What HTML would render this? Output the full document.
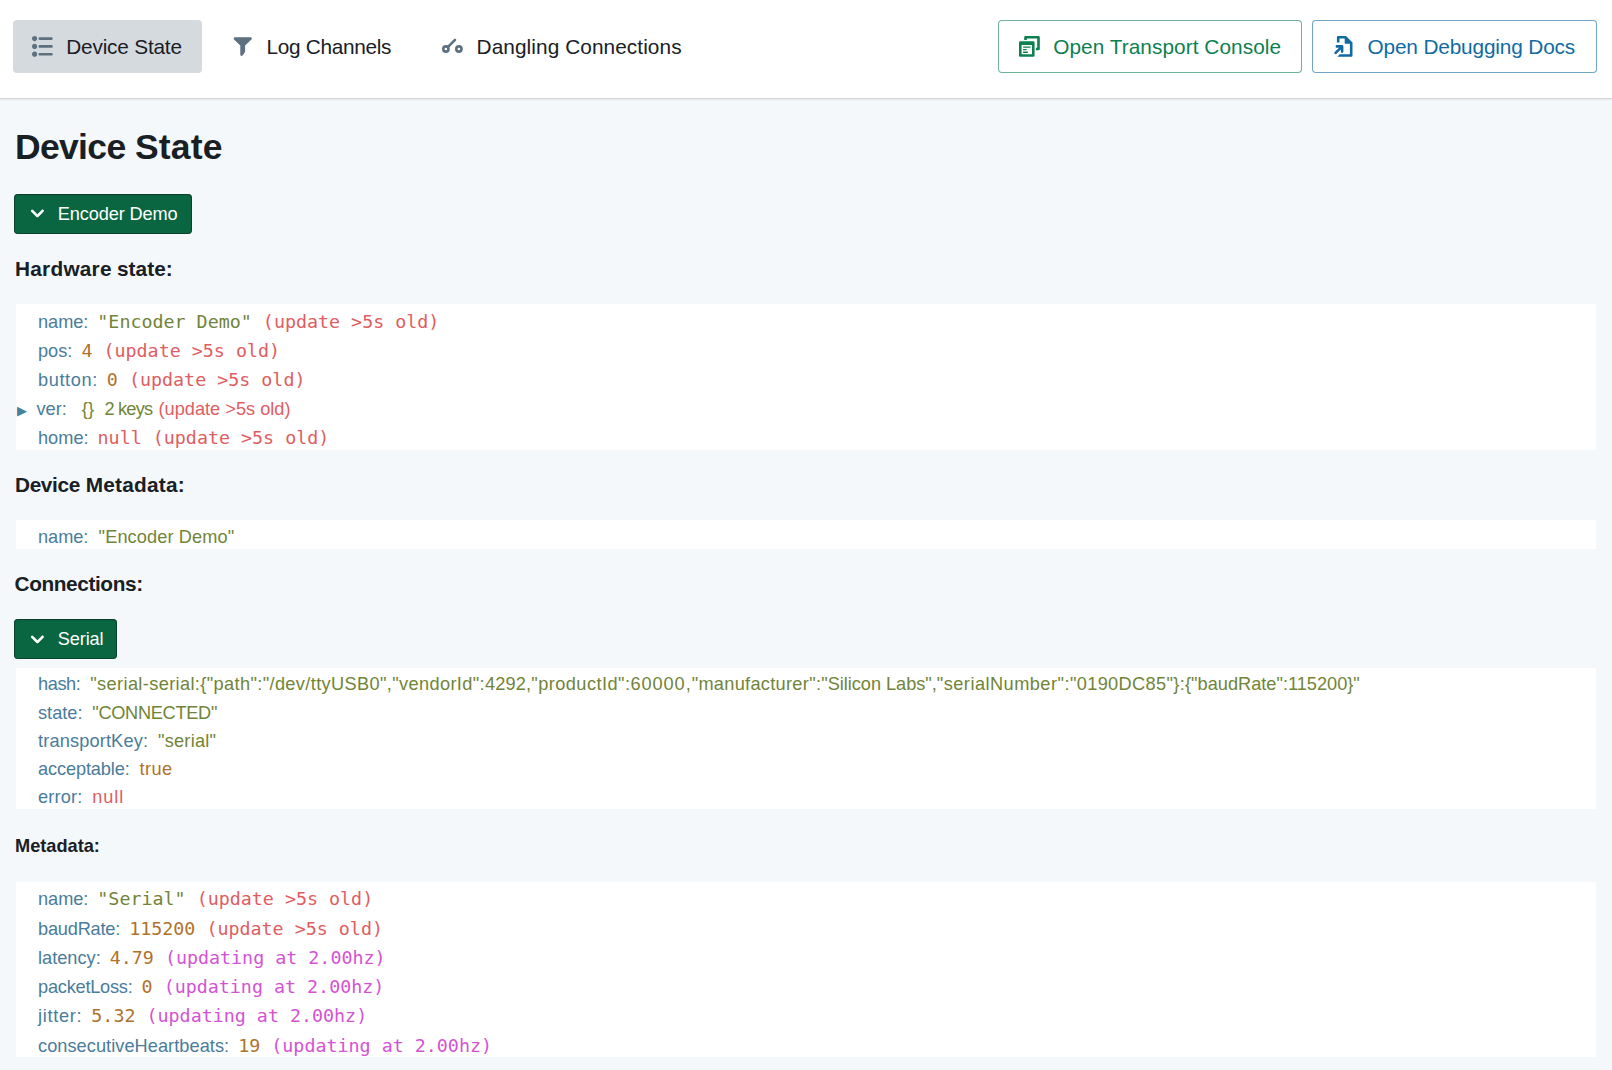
<!DOCTYPE html>
<html lang="en">
<head>
<meta charset="utf-8">
<title>Device State</title>
<style>
html,body{margin:0;padding:0;}
body{width:1612px;height:1070px;overflow:hidden;background:#f5f8fa;color:#182026;
  font-family:"Liberation Sans",sans-serif;font-size:18.2px;position:relative;
  }
*{box-sizing:border-box;}
.nav{position:absolute;left:0;top:0;width:1612px;height:98px;background:#fff;}
.nav:after{content:"";position:absolute;left:0;top:98px;width:1612px;height:3px;
  background:linear-gradient(#d3d7db 0,#d3d7db 1px,#e9ecef 1px,#e9ecef 2px,#f2f5f7 2px,#f2f5f7 3px);}
.nbtn{position:absolute;top:20px;height:52.5px;border-radius:4px;font-size:20.8px;
  line-height:52.5px;white-space:nowrap;color:#182026;}
.nbtn svg{position:absolute;top:15.85px;width:20.8px;height:20.8px;fill:#5c7080;overflow:visible;}
.nbtn .t{position:absolute;top:0.7px;}
.nbtn.active{background:rgba(115,134,148,.3);}
.nbtn.out{border:1px solid;background:#fff;}
.nbtn.green{color:#0d8050;border-color:rgba(13,128,80,.6);}
.nbtn.green svg{fill:#0d8050;}
.nbtn.blue{color:#106ba3;border-color:rgba(16,107,163,.6);}
.nbtn.blue svg{fill:#106ba3;}
h2,h5,h6{margin:0;position:absolute;left:15px;font-weight:bold;white-space:nowrap;color:#182026;}
h2{font-size:35.5px;line-height:42px;letter-spacing:-0.3px;}
h5{font-size:20.8px;line-height:24px;}
h6{font-size:18.2px;line-height:22px;}
.gbtn{position:absolute;left:14.2px;height:39.75px;border-radius:4px;background:#0a6640;color:#fff;
  box-shadow:inset 0 0 0 1px rgba(16,22,26,.4),inset 0 1px 2px rgba(16,22,26,.2);
  font-size:18.2px;line-height:41.5px;white-space:nowrap;}
.gbtn svg{position:absolute;left:12.7px;top:9.45px;width:20.8px;height:20.8px;fill:#fff;}
.gbtn .t{position:absolute;left:43.6px;top:0;letter-spacing:-0.13px;}
.box{position:absolute;left:15.75px;width:1580.5px;background:#fff;}
.row{position:relative;height:28.2px;line-height:28.2px;white-space:nowrap;padding-left:22.25px;}
.k{color:#4a7c9b;}
.v{margin-left:9.8px;}
.v.mono{margin-left:9px;}
.mono{font-family:"DejaVu Sans Mono","Liberation Mono",monospace;font-size:18.33px;}
.s{color:#718438;}
.n{color:#b0722a;}
.nul{color:#e05d62;}
.old{color:#e05d62;}
.upd{color:#d453d4;}
.arrow{position:absolute;left:1.1px;top:0.9px;color:#4a7f99;font-size:13.4px;}
</style>
</head>
<body>

<div class="nav">
  <div class="nbtn active" style="left:13px;width:188.5px">
    <svg viewBox="0 0 16 16" style="left:19px"><path d="M2 6C.9 6 0 6.9 0 8s.9 2 2 2 2-.9 2-2-.9-2-2-2zm4-3h9c.55 0 1-.45 1-1s-.45-1-1-1H6c-.55 0-1 .45-1 1s.45 1 1 1zM2 12c-1.1 0-2 .9-2 2s.9 2 2 2 2-.9 2-2-.9-2-2-2zm13-5H6c-.55 0-1 .45-1 1s.45 1 1 1h9c.55 0 1-.45 1-1s-.45-1-1-1zm0 6H6c-.55 0-1 .45-1 1s.45 1 1 1h9c.55 0 1-.45 1-1s-.45-1-1-1zM2 0C.9 0 0 .9 0 2s.9 2 2 2 2-.9 2-2-.9-2-2-2z"/></svg>
    <span class="t" style="left:53.3px;letter-spacing:-0.2px">Device State</span>
  </div>
  <div class="nbtn" style="left:213.25px;width:197px">
    <svg viewBox="0 0 16 16" style="left:19.5px"><path d="M14.5 1.9c0-.55-.45-1-1-1h-12a1 1 0 00-.71 1.71L5.6 7.3v7c0 .55.45 1 1 1 .28 0 .53-.11.71-.29l1.7-2.300c.18-.18.29-.43.29-.71V7.3l4.9-4.69c.18-.18.3-.43.3-.71z"/></svg>
    <span class="t" style="left:53.2px;letter-spacing:-0.3px">Log Channels</span>
  </div>
  <div class="nbtn" style="left:422.25px;width:278px">
    <svg viewBox="0 0 16 16" style="left:19.5px"><g fill="none" stroke="#5c7080" stroke-width="2"><circle cx="3" cy="10" r="2"/><circle cx="13" cy="10" r="2"/><path d="M4.6 8.4L10 3" stroke-linecap="round"/></g></svg>
    <span class="t" style="left:54.3px;letter-spacing:0.08px">Dangling Connections</span>
  </div>
  <div class="nbtn out green" style="left:998px;width:303.5px">
    <svg viewBox="0 0 16 16" style="left:20px;top:14.85px"><path d="M3.5 9h5c.28 0 .5-.22.5-.5S8.780 8 8.500 8h-5c-.28 0-.5.22-.5.5s.22.5.5.5zm0 2h2c.28 0 .5-.22.5-.5s-.22-.5-.5-.5h-2c-.28 0-.5.22-.5.5s.22.5.5.5zm0 2h3c.28 0 .5-.22.5-.5s-.22-.5-.5-.5h-3c-.28 0-.5.22-.5.5s.22.5.5.5zM11 4H1c-.55 0-1 .45-1 1v10c0 .55.45 1 1 1h10c.55 0 1-.45 1-1V5c0-.55-.45-1-1-1zm-1 10H2V7h8v7zm5-14H5c-.55 0-1 .45-1 1v2h2V2h8v7h-1v2h2c.55 0 1-.45 1-1V1c0-.55-.45-1-1-1z"/></svg>
    <span class="t" style="left:54.2px;top:-0.3px;letter-spacing:0.06px">Open Transport Console</span>
  </div>
  <div class="nbtn out blue" style="left:1312px;width:285px">
    <svg viewBox="0 0 16 16" style="left:20px;top:14.85px"><path d="M6 12c0 .55.45 1 1 1s1-.45 1-1V8c0-.55-.45-1-1-1H3c-.55 0-1 .45-1 1s.45 1 1 1h1.590L1.300 12.290c-.19.18-.3.43-.3.71a1.003 1.003 0 001.710.71L6 10.410V12zM10 0H4c-.55 0-1 .45-1 1v4h2V2h4v4h4v8H5.240l-1.800 1.800c.16.12.35.2.56.2h10c.55 0 1-.45 1-1V5l-5-5z"/></svg>
    <span class="t" style="left:54.5px;top:-0.3px;letter-spacing:-0.15px">Open Debugging Docs</span>
  </div>
</div>

<h2 style="top:125.7px"><span style="letter-spacing:-0.67px">Device</span> <span style="letter-spacing:0.14px">State</span></h2>

<div class="gbtn" style="top:194px;width:177.5px">
  <svg viewBox="0 0 16 16"><path d="M12 5c-.28 0-.53.11-.71.29L8 8.590l-3.290-3.300a1.003 1.003 0 00-1.420 1.420l4 4c.18.18.43.29.71.29s.53-.11.71-.29l4-4A1.003 1.003 0 0012 5z"/></svg>
  <span class="t">Encoder Demo</span>
</div>

<h5 style="top:257px"><span style="letter-spacing:0.25px">Hardware</span> <span style="letter-spacing:0.05px;margin-left:-0.6px">state:</span></h5>

<div class="box" style="top:303.9px;height:146.1px;padding-top:3.45px">
  <div class="row" style="height:29px;line-height:29px"><span class="k" style="letter-spacing:-0.05px">name:</span><span class="v mono"><span class="s">"Encoder Demo"</span> <span class="old">(update &gt;5s old)</span></span></div>
  <div class="row" style="height:29px;line-height:29px"><span class="k">pos:</span><span class="v mono"><span class="n">4</span> <span class="old">(update &gt;5s old)</span></span></div>
  <div class="row" style="height:29px;line-height:29px"><span class="k" style="letter-spacing:0.6px">button:</span><span class="v mono"><span class="n">0</span> <span class="old">(update &gt;5s old)</span></span></div>
  <div class="row" style="height:29px;line-height:29px;top:0.6px"><span class="arrow">&#9654;</span><span class="k" style="margin-left:-1.5px">ver:</span><span class="v s" style="margin-left:15px">{}</span><span class="v s" style="margin-left:10.5px;letter-spacing:-0.8px">2 keys</span><span class="v old" style="margin-left:6.3px">(update &gt;5s old)</span></div>
  <div class="row" style="height:29px;line-height:29px"><span class="k">home:</span><span class="v mono"><span class="nul">null</span> <span class="old">(update &gt;5s old)</span></span></div>
</div>

<h5 style="top:472.6px"><span style="letter-spacing:-0.37px">Device</span> <span style="letter-spacing:0.25px">Metadata:</span></h5>

<div class="box" style="top:519.9px;height:29.1px;padding-top:2.9px">
  <div class="row"><span class="k" style="letter-spacing:-0.05px">name:</span><span class="v s" style="letter-spacing:0.1px;margin-left:10.3px">"Encoder Demo"</span></div>
</div>

<h5 style="top:571.6px;left:14.6px;letter-spacing:-0.4px">Connections:</h5>

<div class="gbtn" style="top:619.2px;width:102.5px">
  <svg viewBox="0 0 16 16"><path d="M12 5c-.28 0-.53.11-.71.29L8 8.590l-3.290-3.300a1.003 1.003 0 00-1.420 1.420l4 4c.18.18.43.29.71.29s.53-.11.71-.29l4-4A1.003 1.003 0 0012 5z"/></svg>
  <span class="t">Serial</span>
</div>

<div class="box" style="top:667.9px;height:141.2px;padding-top:2.6px">
  <div class="row"><span class="k" style="letter-spacing:-0.4px">hash:</span><span class="v s"><span style="letter-spacing:0.366px">"serial-serial:{"path":"/dev/ttyUSB0","vendorId":</span><span style="letter-spacing:0.150px">4292,</span><span style="letter-spacing:0.446px">"productId":</span><span style="letter-spacing:0.925px">60000,</span><span style="letter-spacing:0.300px">"manufacturer":</span><span style="letter-spacing:-0.033px">"Silicon Labs",</span><span style="letter-spacing:0.467px">"serialNumber":</span><span style="letter-spacing:0.342px">"0190DC85"}:</span><span style="letter-spacing:0.000px">{"baudRate":115200}"</span></span></div>
  <div class="row"><span class="k">state:</span><span class="v s" style="letter-spacing:-0.3px">"CONNECTED"</span></div>
  <div class="row"><span class="k" style="letter-spacing:0.15px">transportKey:</span><span class="v s" style="letter-spacing:0.25px">"serial"</span></div>
  <div class="row"><span class="k" style="letter-spacing:-0.12px">acceptable:</span><span class="v n" style="letter-spacing:0.45px">true</span></div>
  <div class="row"><span class="k" style="letter-spacing:0.17px">error:</span><span class="v nul" style="letter-spacing:0.9px">null</span></div>
</div>

<h6 style="top:835px">Metadata:</h6>

<div class="box" style="top:881.84px;height:175.16px;padding-top:2.4px">
  <div class="row" style="height:29.3px;line-height:29.3px"><span class="k" style="letter-spacing:-0.05px">name:</span><span class="v mono"><span class="s">"Serial"</span> <span class="old">(update &gt;5s old)</span></span></div>
  <div class="row" style="height:29.3px;line-height:29.3px"><span class="k" style="letter-spacing:-0.2px">baudRate:</span><span class="v mono"><span class="n">115200</span> <span class="old">(update &gt;5s old)</span></span></div>
  <div class="row" style="height:29.3px;line-height:29.3px"><span class="k">latency:</span><span class="v mono"><span class="n">4.79</span> <span class="upd">(updating at 2.00hz)</span></span></div>
  <div class="row" style="height:29.3px;line-height:29.3px"><span class="k" style="letter-spacing:-0.23px">packetLoss:</span><span class="v mono"><span class="n">0</span> <span class="upd">(updating at 2.00hz)</span></span></div>
  <div class="row" style="height:29.3px;line-height:29.3px"><span class="k" style="letter-spacing:0.7px">jitter:</span><span class="v mono"><span class="n">5.32</span> <span class="upd">(updating at 2.00hz)</span></span></div>
  <div class="row" style="height:29.3px;line-height:29.3px"><span class="k" style="letter-spacing:0.05px">consecutiveHeartbeats:</span><span class="v mono"><span class="n">19</span> <span class="upd">(updating at 2.00hz)</span></span></div>
</div>

</body>
</html>
